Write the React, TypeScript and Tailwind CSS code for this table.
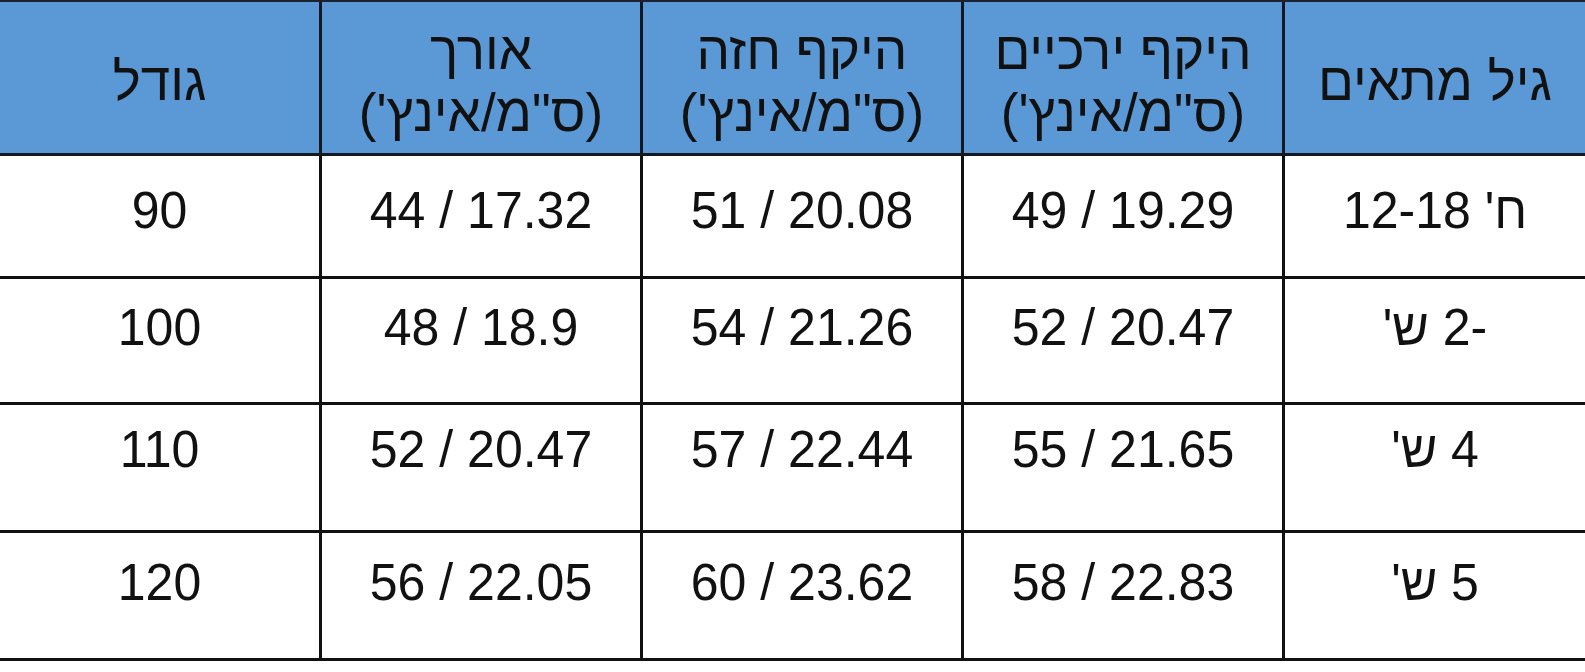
const header = [
  { lines: ["גודל"] },
  { lines: ["אורך", "(ס\"מ/אינץ')"] },
  { lines: ["היקף חזה", "(ס\"מ/אינץ')"] },
  { lines: ["היקף ירכיים", "(ס\"מ/אינץ')"] },
  { lines: ["גיל מתאים"] },
];

const rows = [
  { h: "h-[123px]", pad: "pb-[12px]", cells: ["90", "44 / 17.32", "51 / 20.08", "49 / 19.29", "ח' 12-18"] },
  { h: "h-[126px]", pad: "pb-[26px]", cells: ["100", "48 / 18.9", "54 / 21.26", "52 / 20.47", "-2 ש'"] },
  { h: "h-[128px]", pad: "pb-[36px]", cells: ["110", "52 / 20.47", "57 / 22.44", "55 / 21.65", "4 ש'"] },
  { h: "h-[128px]", pad: "pb-[26px]", cells: ["120", "56 / 22.05", "60 / 23.62", "58 / 22.83", "5 ש'"] },
];

const App = () => {
  return (
    <div
      className="w-[1585px] h-[672px] bg-white text-[#111]"
      style={{ fontFamily: '"Liberation Sans", Arial, "DejaVu Sans", sans-serif' }}
    >
      <div className="border-t-2 border-[#1b2333]">
        {/* header */}
        <div className="grid grid-cols-[319px_321px_321px_321px_303px] h-[154px] bg-[#5b98d6] border-b-[3px] border-[#141820]">
          {header.map((c, i) => (
            <div
              key={i}
              dir="rtl"
              className={`flex flex-col items-center justify-center text-[53px] leading-[62px] pt-[8px] ${
                i > 0 ? "border-l-[3px] border-[#141820]" : ""
              }`}
            >
              {c.lines.map((l, j) => (
                <span key={j} className="block whitespace-nowrap">
                  {l}
                </span>
              ))}
            </div>
          ))}
        </div>

        {/* body */}
        {rows.map((r, ri) => (
          <div
            key={ri}
            className={`grid grid-cols-[319px_321px_321px_321px_303px] ${r.h} border-b-[3px] border-[#111]`}
          >
            {r.cells.map((c, ci) => (
              <div
                key={ci}
                dir={ci === 4 ? "rtl" : "ltr"}
                className={`flex items-center justify-center text-[50px] ${r.pad} ${
                  ci > 0 ? "border-l-[3px] border-[#111]" : ""
                }`}
              >
                <span className="inline-block scale-y-[1.05] whitespace-nowrap">{c}</span>
              </div>
            ))}
          </div>
        ))}
      </div>
    </div>
  );
};

export default App;
